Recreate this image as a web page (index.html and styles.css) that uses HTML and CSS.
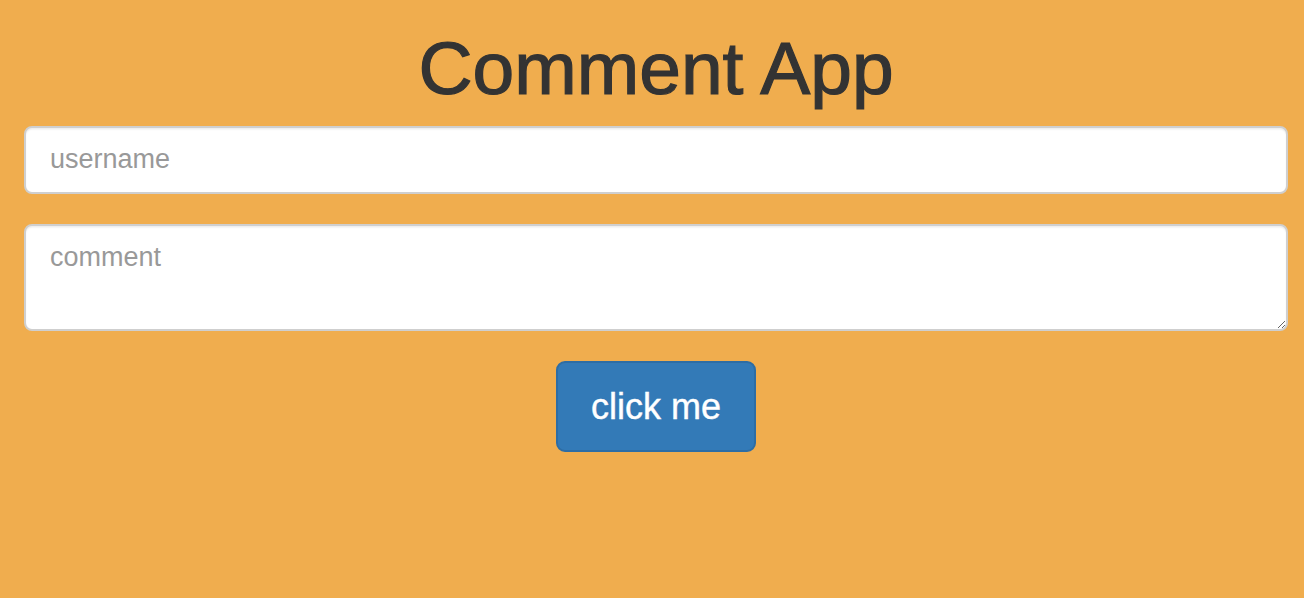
FILE: index.html
```html
<!DOCTYPE html>
<html lang="en">
<head>
<meta charset="utf-8">
<title>Comment App</title>
<link rel="stylesheet" href="styles.css">
</head>
<body>
<div class="wrapper">
  <h1 class="title">Comment App</h1>
  <div class="form-group">
    <input class="field field-input" type="text" placeholder="username">
  </div>
  <div class="form-group">
    <textarea class="field field-area" placeholder="comment"></textarea>
  </div>
  <div class="actions">
    <button class="btn" type="button">click me</button>
  </div>
</div>
</body>
</html>
```

FILE: styles.css
```css
html, body {
  margin: 0;
  padding: 0;
  background: #f0ad4e;
  height: 100%;
}
body {
  font-family: "Liberation Sans", Arial, Helvetica, sans-serif;
  color: #333;
}
.wrapper {
  padding: 0 16px 0 24px;
  display: flex;
  flex-direction: column;
}
.title {
  margin: 27px 0 16px;
  font-size: 75px;
  font-weight: 400;
  line-height: 1.1;
  text-align: center;
  color: #333;
  -webkit-text-stroke: 1.2px #333;
}
.form-group {
  margin-bottom: 30px;
}
.field {
  display: block;
  box-sizing: border-box;
  width: 100%;
  margin: 0;
  font-family: "Liberation Sans", Arial, Helvetica, sans-serif;
  font-size: 27px;
  color: #555;
  background: #fff;
  border: 2px solid #cfcfcf;
  border-radius: 8px;
  box-shadow: inset 0 1.5px 1.5px rgba(0, 0, 0, 0.075);
  outline: none;
}
.field::placeholder {
  color: #999;
}
.field-input {
  height: 68px;
  padding: 0 24px;
}
.field-area {
  height: 107px;
  padding: 13px 24px;
  line-height: 36px;
  resize: vertical;
}
.actions {
  display: flex;
  justify-content: center;
}
.btn {
  box-sizing: border-box;
  height: 91px;
  padding: 0 33px;
  margin: 0;
  font-family: "Liberation Sans", Arial, Helvetica, sans-serif;
  font-size: 36px;
  line-height: 87px;
  color: #fff;
  background: #337ab7;
  border: 2px solid #2e6da4;
  border-radius: 9px;
  cursor: pointer;
  -webkit-text-stroke: 0.4px #fff;
}
```
